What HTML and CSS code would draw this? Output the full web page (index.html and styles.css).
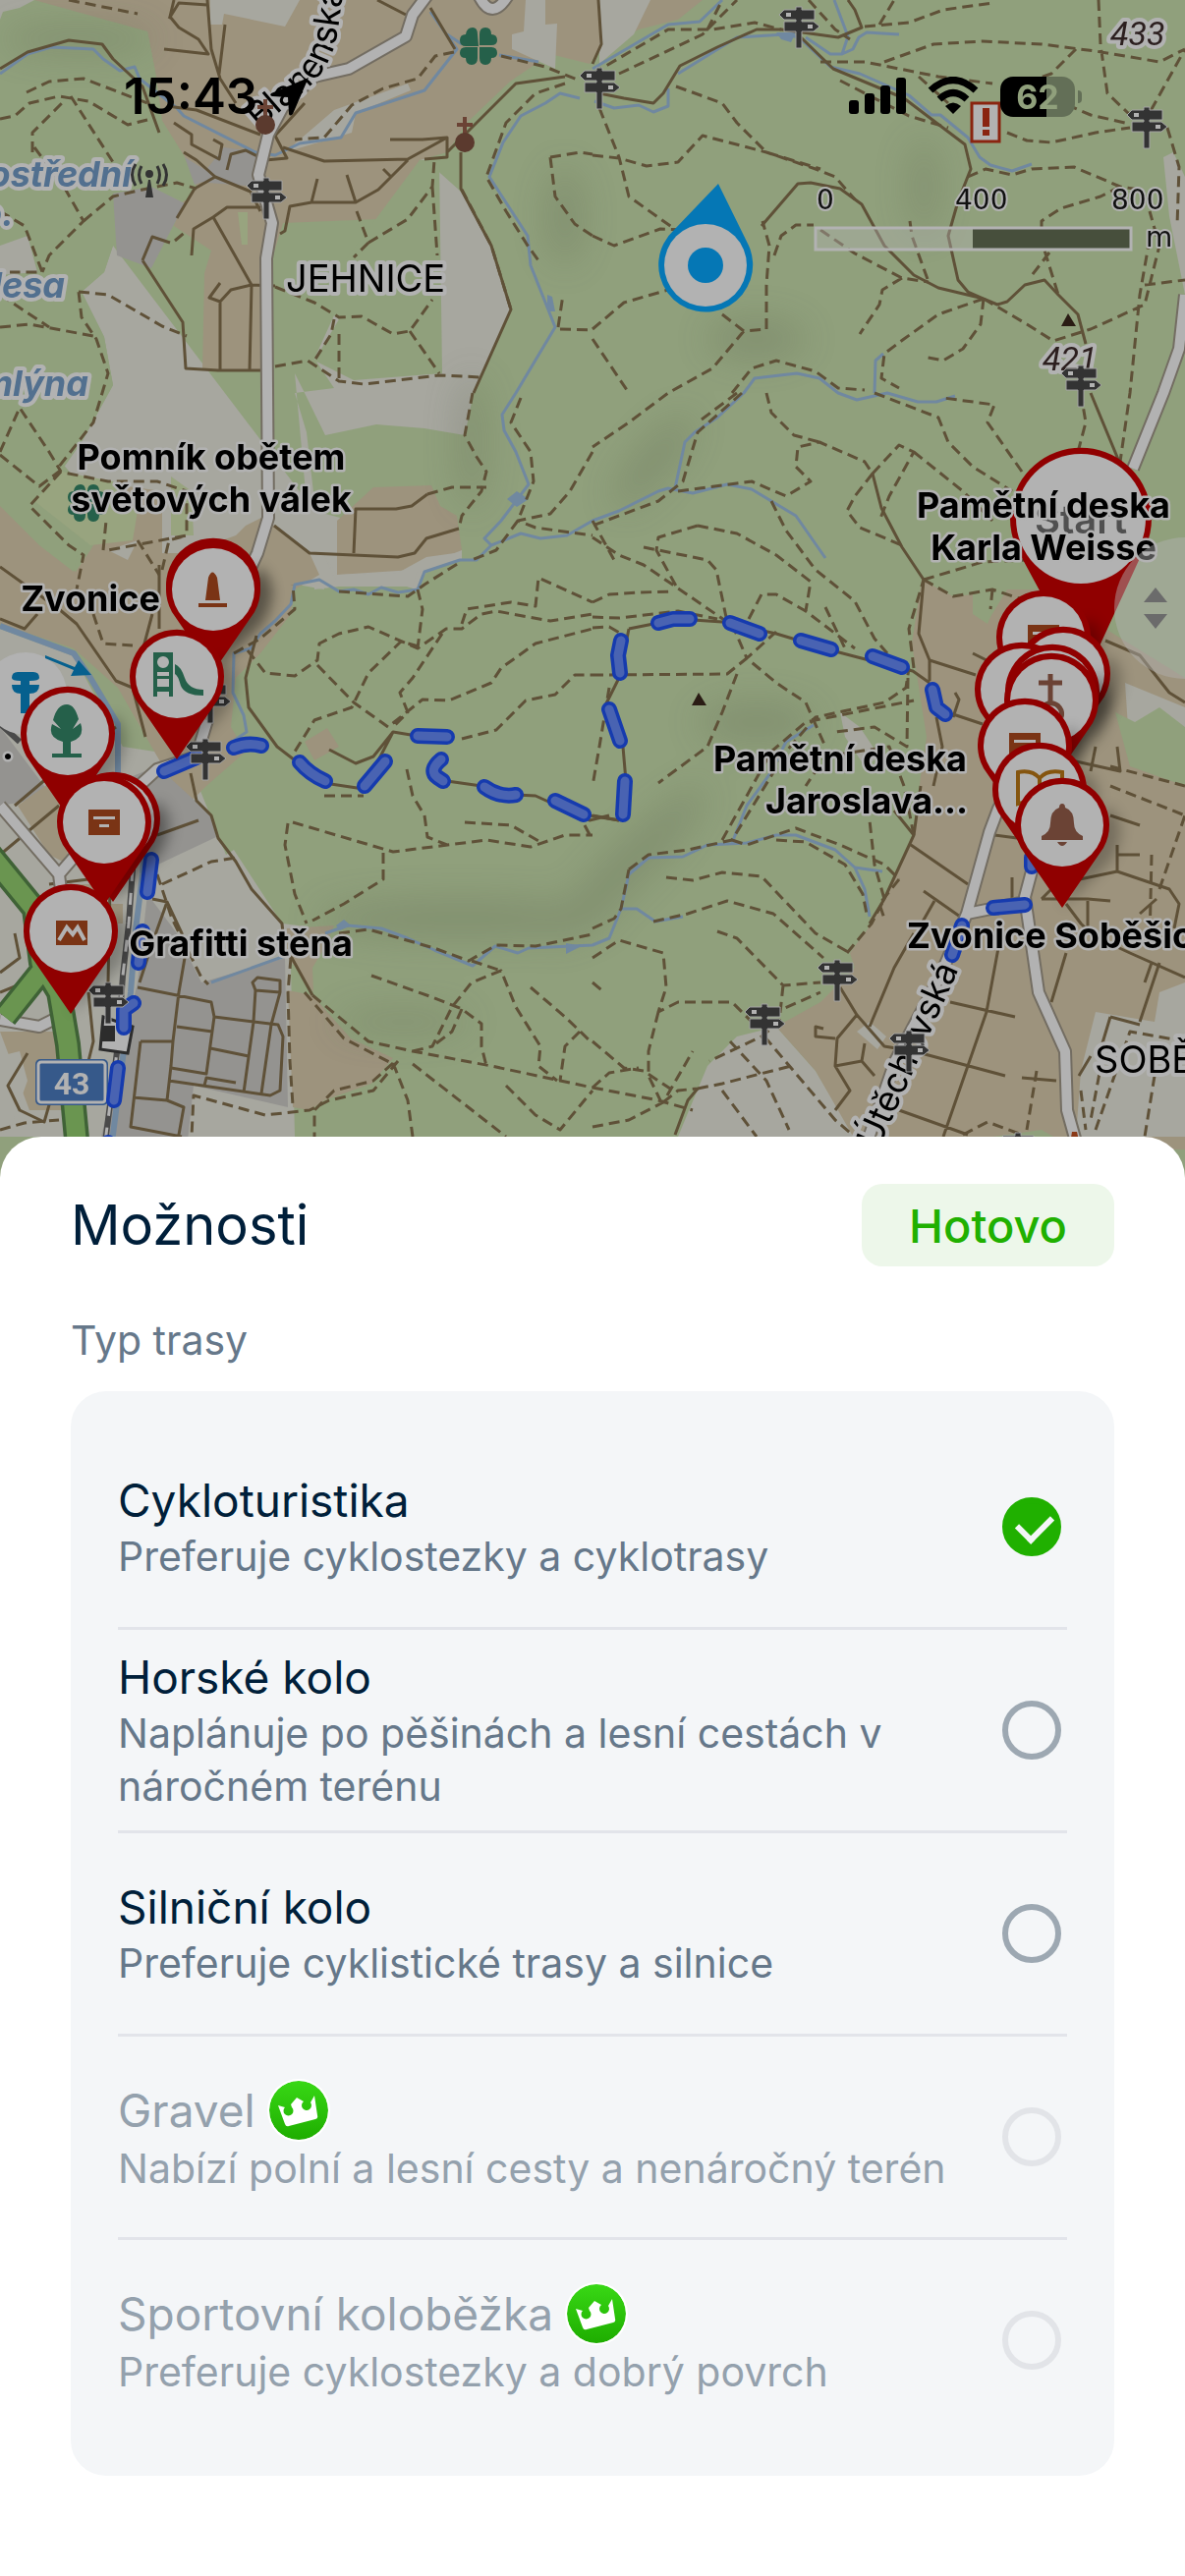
FILE: index.html
```
<!DOCTYPE html>
<html lang="cs">
<head>
    <meta charset="UTF-8">
    <meta name="viewport" content="width=device-width, initial-scale=1.0">
    <title>Možnosti trasy</title>
    <link rel="stylesheet" href="styles.css">
</head>
<body>
    <header class="status">
        <div class="status-group">
            <span class="time">15:43</span>
            <svg width="42" height="42" viewBox="0 0 42 42"><path d="M40 2 2 18Q0 20 3 21L19 22 20 39Q21 42 24 39Z"/></svg>
        </div>
        <div class="status-group status-right">
            <svg width="58" height="40" viewBox="0 0 58 40">
                <rect y="24" width="10" height="14" rx="3"/>
                <rect x="16" y="17" width="10" height="21" rx="3"/>
                <rect x="32" y="9" width="10" height="29" rx="3"/>
                <rect x="48" y="1" width="10" height="37" rx="3"/>
            </svg>
            <svg width="52" height="40" viewBox="0 0 52 40">
                <path class="wifi" d="M3 14Q26 -7 49 14M12 23Q26 10 40 23"/>
                <path d="M26 38 18 30Q26 23 34 30Z"/>
            </svg>
            <div class="battery"><span>62</span></div>
        </div>
    </header>

    <svg class="map" viewBox="0 0 1206 1200">
        <defs>
            <filter id="soft"><feGaussianBlur stdDeviation="18"/></filter>
            <filter id="soft2" x="-50%" y="-50%" width="200%" height="200%"><feGaussianBlur stdDeviation="7"/></filter>
            <linearGradient id="crownBg" x2="0" y2="1">
                <stop offset="0" stop-color="#38d815"/>
                <stop offset="1" stop-color="#1ead00"/>
            </linearGradient>
            <g id="post">
                <path class="post" d="M-3 0H3V3H16V13H3V15H15L21 20 15 25H3V42H-3V25H-15V15H-3V13H-15L-20 8-15 3H-3Z"/>
                <path fill="#b2b2b2" d="M-13 6h5v4h-5zM9 18h5v4h-5z"/>
            </g>
            <g id="pin">
                <path class="shade" filter="url(#soft2)" d="M0 84 20 20 46 -20Q72 0 48 38Z"/>
                <path fill="#900000" d="M0 84-42 23A48 48 0 1 1 42 23Z"/>
                <circle r="42" fill="#b2b2b2"/>
            </g>
            <g id="sign">
                <path fill="#7a3415" d="M-16-13H16V13H-16Z"/>
                <path fill="#b2b2b2" d="M-11-6H11V-3H-11ZM-5 2H5V5H-5Z"/>
            </g>
            <g id="clover">
                <path fill="#25604a" d="M0 0H-13Q-19 0-19-6 -19-12-13-12 -12-19-6-19 -1-19-1-12ZM1-1V-12Q1-19 7-19 13-19 13-12 19-12 19-6 19-1 13-1ZM1 1H13Q19 1 19 7 19 12 13 12 13 19 7 19 1 19 1 12ZM-1 1V12Q-1 19-7 19 -13 19-13 12 -19 12-19 7 -19 1-13 1Z"/>
            </g>
            <g id="chapel">
                <path fill="#6b4335" d="M-2-18H2V-12H8V-8H2V0H-2V-8H-8V-12H-2Z"/>
                <circle cy="8" r="10" fill="#5b3a2e"/>
            </g>
            <path id="roads" d="M273 137 263 178 277 227 271 263 273 527 262 563 240 610M273 137 290 105 320 78 355 70 413 37 420 15 435 -5M125 815 160 783 200 770 211 733M0 820 60 890 65 930M60 890 125 815M0 1038 40 1045 60 1035M1206 300 1200 355 1184 400 1153 477M1050 760 1016 823 1007 847 984 930 957 993 911 1080 880 1170M984 930 1043 918M1060 820 1051 883 1043 913 1057 1010 1084 1070 1086 1130 1100 1180M485 -10Q500 28 520 -10"/>
            <path id="highway" d="M-10 870 35 925 42 980 60 1010 69 1063 79 1170M5 1035 45 985"/>
            <path id="route" d="M167 785 200 771M238 761Q252 755 266 759M305 776Q315 788 331 795M392 775 371 800M425 749 455 750M449 773Q436 784 445 791L451 795M493 801Q508 812 525 809M565 815 594 829M636 795 634 829M620 722 631 754M632 652 629 667 631 685M670 634 685 630 702 630M743 634 773 645M815 652 846 661M888 668 918 679M949 702 953 720 962 727M1050 873V882M1011 924 1043 921M979 942 969 972M154 875 150 908M145 948 141 980M136 1021 126 1028V1046M120 1087 116 1120M110 1163 108 1180"/>
        </defs>

        <!-- forests, fields, towns -->
        <rect width="1206" height="1200" fill="#90a07c"/>
        <g class="field">
            <path d="M0 0H35L20 8 3 12 0 20ZM115 250 106 277 83 297 106 343 115 392 83 450 62 470 92 505 110 560 330 600 322 565 320 510 312 440 300 400 340 395 320 365 345 310 375 247 430 160 469 195 500 250 520 315 482 400 473 443 432 436 383 432 331 443 310 400 300 380 320 600 345 597 407 595 424 600 434 582 470 570 470 560 320 520Z"/>
            <path d="M330 565 343 597 407 595 424 580 470 566 470 560 420 566Z"/>
            <path d="M0 640 75 668 125 760 190 770 230 870 238 865 287 940 312 943 296 985 300 1157H0Z"/>
            <path d="M750 1055 790 1045 830 1090 870 1157H690L720 1085Z"/>
            <path d="M1184 160 1194 155 1206 180V300L1190 220Z"/>
        </g>
        <path class="town" d="M35 0 150 32 158 73 165 123 188 160 200 190 185 207 177 230 200 245 215 255 208 278 206 377 265 377 277 263 288 227 385 223 408 207 427 163 455 155 475 125 519 83 560 55 600 65 610 50 650 30 690 20 715 0Z"/>
        <path class="town" d="M0 513 77 582 92 560 130 495 165 500 165 563 190 563 240 545 250 535 270 525 279 535 315 563 325 585 300 600 296 625 265 665 240 690 235 740 250 765 210 800 190 820 160 770 120 700 75 660 0 635Z"/>
        <path class="town" d="M938 590 970 607 990 605 1005 633 1025 600 1060 600 1206 690V1170H1095L1060 1150 990 1160H870L830 1090 790 1045 835 1020 870 985 865 970 887 940 900 915 930 850 937 790 943 750 928 655Z"/>
        <path class="town" d="M293 1008 318 1013 357 1057 400 1077 378 1103 330 1120 315 1130 298 1127ZM292 945 340 942 330 965 318 985 319 1010 290 970ZM310 755 333 741 345 760 320 774ZM343 530 380 496 439 494 448 515 465 525 470 560 420 580 343 585Z"/>
        <path class="field" d="M214 0H305L290 27 228 14 226 25H214ZM535 0H555V25L567 24 565 70 521 50V35L533 32ZM600 0H610V65L645 35 662 0ZM290 155 340 112 415 85 418 92 362 115 358 135ZM330 565 343 585 405 583 434 567 470 562 468 570 424 583 420 597 345 597Z"/>
        <path class="field" d="M1145 695 1206 720V800L1150 770ZM1206 1000 1180 1010 1175 1040 1115 1030 1100 1090 1095 1157H1206ZM872 1050 885 1040 902 1055 893 1068Z"/>
        <path fill="#90a07c" d="M0 20 35 8 150 32 158 73 165 123 188 160 200 190 190 205 154 190 115 197V250L106 277 83 297 106 343 115 392 83 450 62 480 90 505 75 582 40 555 0 515ZM427 163 447 162 450 380 360 387 320 367 345 325 320 305 355 260ZM1135 725 1155 735 1180 720 1206 740V800L1150 780ZM990 605 1015 610 1005 635 990 625Z"/>
        <path fill="#98a47f" d="M35 510 62 480 115 490 140 520 135 550 92 555ZM174 485 195 500 197 545 174 545ZM242 216H252V249H246Z"/>
        <path fill="#a7a79f" d="M0 250 28 240 38 277 0 280ZM110 560 140 550 130 570Z"/>
        <path class="urban" d="M115 197 154 190 188 207 154 273 119 260ZM188 160 220 180 198 188ZM228 150 262 155 262 190 200 185ZM0 740 60 820 160 780 215 830 220 852 150 885 120 800 0 820ZM150 910 180 950 205 1000 290 975 293 1127 197 1105 190 1170H100L140 1000Z"/>
        <path class="town" d="M18 820 60 790 70 880 50 870ZM0 1050 60 1050 70 1130 30 1130ZM110 920H125V940H110ZM40 930 60 900 100 900 90 1000Z"/>
        <path fill="#a7a79f" d="M0 1075 20 1070 28 1100 10 1150 0 1157ZM855 725 875 740 895 770 880 780 860 750Z"/>

        <!-- hill shading -->
        <g class="hill" filter="url(#soft)">
            <ellipse cx="80" cy="40" rx="80" ry="14"/>
            <ellipse cx="480" cy="450" rx="14" ry="70"/>
            <ellipse cx="575" cy="220" rx="18" ry="50"/>
            <ellipse cx="940" cy="190" rx="14" ry="50"/>
            <ellipse cx="770" cy="345" rx="50" ry="20"/>
            <ellipse cx="665" cy="470" rx="60" ry="18" transform="rotate(-50 665 470)"/>
            <ellipse cx="470" cy="935" rx="150" ry="20"/>
            <ellipse cx="640" cy="880" rx="110" ry="20" transform="rotate(-45 640 880)"/>
            <ellipse cx="770" cy="735" rx="60" ry="20"/>
            <ellipse cx="410" cy="1040" rx="70" ry="12"/>
        </g>

        <!-- streams -->
        <path class="stream" d="M0 75 28 55 52 48 95 50 105 60 122 72 137 68 142 80 180 110 187 118 260 155 280 158 305 146 347 140 362 115 432 92 465 50 438 12M455 35 470 45M508 56 548 63M590 100 570 95 555 105 530 118 512 145 498 180 537 240 540 270 565 333 525 400 511 422 513 438 525 460 538 493 510 530 493 548 500 555 485 570 468 570 432 582 425 600 405 603 388 598 375 605 360 600 345 602 325 590 300 595 296 615 280 632 265 645 255 660 238 665 237 705 248 728 251 745 232 758M500 555 530 543 550 548 577 545 603 530 630 520 670 500 680 497 705 502 740 493 765 498 785 510 810 525 840 568M687 497 697 450 707 440 730 425 757 400 768 385 811 380 834 385 853 400 872 407 903 400 934 409 953 409 972 403M890 400 891 367 899 360M603 70 680 25 712 22 735 0M690 75 750 38 800 35 813 38 845 68 875 75 925 97 948 117 957 117 985 140 997 160 1008 168 1030 174 1050 167M849 0 863 37 857 55 845 55 820 38M857 55 868 50 874 38 882 33 915 35M605 103 625 110 650 107 665 114 680 108 680 90"/>
        <path class="stream" d="M331 950 354 942 388 945 415 955 442 967 481 983 504 963 527 970 538 965 603 962 620 955 632 925 640 890 660 873 695 872 720 860 760 858 790 850 810 850 850 865 870 883 880 905 885 933M870 883 898 887M632 925 648 925 667 938 695 933M828 738 800 755 784 787 760 820 745 858M215 1000 290 973"/>
        <path class="river" d="M0 637 75 665 92 690 120 737 120 800 148 850 145 890 138 947 133 1010 125 1077 113 1170"/>
        <path fill="#7088a0" d="M516 508 526 500 538 508 526 516ZM342 942 350 936 357 942 346 947ZM576 960 592 963 576 971ZM790 33 810 33 805 43 795 40ZM557 300 562 302 565 317H557Z"/>

        <!-- small roads and footpaths -->
        <path class="lane" d="M0 70 28 53 70 41 104 45 115 60 145 88 162 135M177 0 173 17 182 28 202 40 212 55 167 50M172 19 182 3 211 5M211 0 215 50 224 80 240 105M229 25 223 75M170 108 200 112 265 137M187 155 200 163 219 180 255 195 265 215M219 180 198 192 180 222M177 125 195 137 195 147 223 162 226 147 217 142M231 173 235 157 250 153 270 163 292 161 280 138 310 105M288 150 330 164 415 162 455 140 430 142 397 142M455 140 455 160 432 162M469 155 469 192 500 250 520 315 482 400M415 163 385 193 362 206 317 206 295 210 290 235 285 238M362 206 353 178M317 206 323 182M398 180 390 172M265 211 231 211 217 221 197 233 195 260M217 221 256 290 254 377M280 291 256 290 235 295 224 307 213 303 224 288M224 307V377M145 265 155 241 173 247M145 265 186 328 189 375 222 377 265 377M455 155 525 85 575 78M438 8 463 50M384 0 413 15"/>
        <path class="lane" d="M610 95 635 100 665 105 675 95 692 67 730 48 770 30 795 30 853 38 877 28 870 10 863 0M815 38 848 70 920 100 982 147 988 172 975 205 965 240 975 285 985 297 1001 304 1015 310 1025 307 1043 290 1063 285 1077 300 1097 320 1105 350M775 230 812 187 825 186 855 192 877 208 900 250 930 280 955 293 1001 304M279 535 315 563 405 567 422 563 434 548 467 538M360 563 362 518 403 518 419 515 435 503M609 0 612 45 603 65M1110 400 1139 470M888 482 897 517 918 557 940 590 935 645 946 672 946 693M946 672 993 687M640 640 665 635 705 631 735 633 790 645 850 663 915 680 929 683 946 695M640 640 630 690 615 720 634 760 637 795M953 730 959 760 950 800M970 727 1000 737M972 705 976 712 970 730M990 665 1010 675M1125 652 1160 667 1190 705 1206 715"/>
        <path class="lane" d="M0 577 60 620 78 635 118 693 135 700 155 625M0 630 25 640 38 625M162 640V575M261 647 250 690 253 720 282 760 295 770 330 797 370 803 400 745 430 750M335 763 362 777 380 770 400 745M455 795 490 800 525 809 545 810 600 835 620 830M600 830 630 835M194 787 200 815 215 830 222 853 240 877 256 905 287 940 290 970 297 975 318 1013M160 850 202 835M135 700 148 750M15 820 62 780 118 740M0 870 60 820M50 900 90 895 108 885"/>
        <path class="lane" d="M143 1060H176L174 1085 170 1120 135 1117M143 1060 133 1147 185 1157M182 1010 176 1060M140 1005 190 1015 215 1020 218 1035 210 1093 174 1087M180 1045 216 1050M218 1035 283 1043 288 1055 285 1110 275 1115 172 1100M258 1040 248 1112M276 1043 266 1113M214 1067 253 1075M257 1000 262 995 285 998V1010L260 1008ZM285 1010 276 1043M260 1008 258 1040M188 975 182 1010M170 1120 187 1127 182 1155M155 915 170 918 185 950 188 975M170 918 155 960 142 1000M208 1105 210 1097 240 1102M28 1072 8 1105 20 1130 45 1142 60 1090M112 900 110 1000M15 950 20 975 0 990M0 1010 25 1000 40 980M90 1010 95 1060 85 1100"/>
        <path class="lane" d="M855 1005 872 1033 900 1065 930 1070 1023 1095M872 1033 852 1057 850 1085 865 1110 850 1130M850 1085 877 1080 890 1095M877 1080 880 1062M850 1057 830 1055 830 1045 838 1047M885 1045 910 985 930 950M927 860 985 900M940 907 980 935M951 917 935 945M967 1020 1033 1035M1016 965 1004 1030 960 1157M1085 970 1070 1020M915 1130 985 1155M1040 1097 1075 1100M1012 850 1035 853M1030 893V920M1060 915 1075 900 1137 887 1190 905 1200 920 1195 945M1060 915H1107L1130 917M1107 917V950L1150 970 1206 995M1137 887V860M1137 870H1160M1085 920 1100 940 1110 950M1180 980 1160 1040M1172 980 1165 1000M1130 1035 1160 1043M1130 1035 1118 1075M1110 1075 1098 1095M687 1155 700 1120 710 1108M1095 775 1140 785 1137 760M1115 760 1110 785M1130 830 1160 840M1177 915 1160 930M930 850 900 915 885 940M910 825 930 850 937 800M603 830 630 835"/>
        <path class="foot" d="M27 94 50 83 85 80 150 105M0 121 15 118 30 105 60 98 90 103 130 127 150 122M72 98 115 165M33 155 33 135 65 103M35 150 65 190 85 225 50 260 43 277M85 225 115 200 145 193 180 186 200 192M0 215 25 230 43 277 10 277M80 297 110 300 165 332 190 342M80 297 83 323 98 345 110 380 95 430 60 475M0 333 30 330 95 342M0 300 50 333M462 53 443 57 425 80 390 90 358 107 330 140 300 142M375 247 415 223 440 190 442 163M440 190 445 260M363 215 375 247 360 262M280 292 320 308 345 323 368 322 400 340 417 337 440 305M417 337 447 380M340 325 337 340 320 367M280 373 313 367 345 388 370 391 447 382 490 384M345 340 345 390M470 193 500 250 520 315M575 85 545 95 515 125 495 180 515 215 537 250 550 268M560 160 590 155 603 157M560 160 565 200 585 228 603 240M570 335 603 336M70 0 140 14M510 57 555 68 590 82M568 333 573 300M178 245 190 235"/>
        <path class="foot" d="M603 75 680 30 725 30 768 23 795 30M630 75 715 35 750 0M720 30 735 0M603 158 630 161 658 169 690 165 715 138 780 155 830 172 850 180 870 203M610 110 630 160 640 200 685 232M688 88 735 105 750 125 780 155 835 172M603 240 625 250 672 233 700 234M603 335 635 308 680 295M735 320 757 337 780 335 780 290 783 250 776 225M757 337 725 375 680 400 640 430 603 455M788 260 795 240 810 229H828M835 234 870 258 918 283 945 287M926 225 928 240 945 287M918 283 898 295 895 310 875 340M1001 304 955 320 920 345 900 360 897 385 915 395M1001 304 998 330 980 355 960 367 940 363M1001 304 1045 330 1072 347 1110 335 1165 310 1180 250 1170 215M1170 243 1160 300 1150 400 1140 470M1118 0 1120 45 1127 95 1148 115 1167 120 1206 50M880 27 925 23 960 10 1010 3M895 25 910 0M823 0 850 30 865 40M900 63 950 45 1000 42 1060 45 1115 52 1180 63 1206 50M835 63 880 63 955 78 1010 85M1095 50 1070 75 1050 82M935 78 965 105M1025 135 1045 143 1070 145 1115 135 1150 130M1070 100 1110 117 1145 125M985 180 1003 172 1030 178 1050 172 1093 170 1140 190 1160 193M1140 190 1120 200 1080 212 1060 225V245L1077 300M1068 257 1048 283M1188 130 1200 170 1198 230M1165 290 1206 285M855 82 925 118 965 130M603 345 640 400"/>
        <path class="foot" d="M745 400 765 375 790 367 830 378 853 395 880 397M481 400 473 443 485 465 495 480 490 500 470 525 467 538M435 503 460 496H495M530 405 520 430 540 460 543 490 527 530 505 560 480 570M603 460 580 500 560 523 527 530 545 537 603 545M603 530 625 570M755 400 710 440 695 490 670 510 603 535M750 400 710 430M690 500 765 490 800 505 825 490 810 475 812 455 834 450 880 470 888 482M780 400 785 420 808 443 834 450M888 482 870 505 862 520 875 537 918 555M888 482 915 453 930 460 905 505 895 530M930 460 980 500 1010 530M890 400 955 425 965 450 990 475 1030 500M1040 480 1005 430 1012 412 960 405M1097 460 1105 430 1100 400M785 510 800 540 830 580 870 612 890 650 903 665M603 547 630 565 655 575 680 592 740 633M710 535 670 547 668 560 690 600M655 557 720 570 729 580 740 633M710 535 750 543 790 565 825 592 820 622M762 630 775 605 790 605 820 622 870 660M840 618 860 660M603 613 620 605 650 603 685 602M603 628 630 629 690 622 730 630M745 635 760 670 790 643M603 687 740 686 760 670 790 695 820 715 840 760M750 686 735 725 720 760 670 797M603 639 620 638 632 645M940 590 970 607 1010 600 1040 610M940 590 1000 572 1045 570M930 680 925 640 940 590M1010 600 1008 620"/>
        <path class="foot" d="M0 460 20 415 50 460 62 480M0 463 40 495 60 480 110 490 160 490 190 500 190 545 110 560M62 480 30 515 70 555 85 565 78 600M105 560 108 530M140 550 162 585M165 580 172 550 190 545M95 625 105 655 135 657M252 662 270 685 300 688 323 672 325 655 345 645 375 638 425 660 454 640 470 640 490 625 505 622 560 632 603 625M426 658 408 653 375 685 358 720 320 733 300 765M470 635 475 620 520 613 545 617 548 588 603 613M323 677 360 715 395 740 430 712 457 713 500 695 510 680 545 655 603 640M450 645 420 690 407 705 415 725 400 740M470 752 505 743 535 713 565 707 585 687 603 687M425 600 430 620 425 660M345 602 415 607 432 595 467 573M238 665 265 650 300 620 298 595M293 838 290 860 300 910 312 940M298 837 400 867 495 855 540 862 575 850 603 850M390 868V895L350 920 318 937M473 837 520 840 550 857M414 783 420 810 432 830 435 852 455 860M620 700 610 760 603 800M345 950 375 946 442 965 477 978 505 962 545 963 603 951M165 900 215 877 240 873M160 890 175 935 205 995 212 1002M330 810H370M595 840 603 855"/>
        <path class="foot" d="M293 1010 295 1080 298 1125M296 975 293 1010M318 1013 375 1060 420 1070 500 1085 603 1107M310 1010 350 1057 400 1083M420 1070 440 1065 460 1025 480 1000 510 988 525 1025 550 1065 548 1085 567 1100M378 993 440 1015 470 1027 490 1042V1065L495 1085M470 1027 460 1050 440 1065M480 978 510 988M540 1005 575 1035 603 1062M400 1082 415 1120 420 1157M420 1083 515 1157M400 1082 380 1100 340 1110 320 1130 320 1157M405 1080 380 1110 335 1120 315 1130 270 1135 197 1115 195 1157M515 1105 545 1135 570 1150 603 1110M590 1050 575 1065 570 1100"/>
        <path class="foot" d="M640 885 660 870 700 865 745 855 800 765 830 730 900 715 922 700 925 680M735 855 785 765 820 735 930 713M745 855 760 860 810 843 855 860 900 880 915 895M790 855 820 857 860 880 878 910 882 930M678 893 705 896 735 888 775 892 830 950 865 970M665 938 700 930 740 917 787 930 838 975M730 948 750 955 797 1003 835 1000M603 945 625 935 632 925 640 885M603 975 630 957 675 970 678 1005 670 1030 690 1020 745 1020 770 1045 790 1030 835 1010M603 1000 615 1010M603 1060 635 1087 655 1090 685 1110M670 1030 660 1070 660 1095 673 1122M603 1107 670 1120 705 1130M603 1147 640 1140 675 1122 705 1070M603 1107 620 1092 650 1087M797 1003 793 1040 775 1055 722 1080M710 1108 735 1103 805 1085M675 1122 690 1110 710 1108M743 1060 780 1100 803 1150M778 1055 850 1140 870 1157M735 1110 770 1157M862 970 887 940 900 915 890 880 885 835M915 895 895 920 900 935M930 850 920 800 905 760 840 770 820 800M924 690 923 760 890 740 850 745M1055 1090 1045 1150M1125 1060 1110 1140M1175 1095 1165 1157M1115 1150 1150 1050 1206 1060M1130 780 1206 800M1130 800 1206 830M1172 870 1170 960M1180 905 1206 830M980 1155 1005 1142 1040 1155M1100 1110 1105 1150M0 1150 25 1143 60 1140"/>
        <path class="works" d="M0 720 115 810M-2 735 20 755M128 800 135 885 131 940 125 993 120 1063 106 1170"/>
        <path class="rail" d="M135 885 131 940 125 993 120 1063 106 1170"/>

        <!-- main roads -->
        <use href="#roads" class="road-edge"/>
        <use href="#roads" class="road"/>
        <use href="#highway" class="highway-edge"/>
        <use href="#highway" class="highway"/>
        <path fill="#b2b2b2" stroke="#2c2c2c" stroke-width="3" d="M105 1035 135 1045 130 1072 102 1068Z"/>
        <path fill="#2c2c2c" d="M103 1044H117V1060H103Z"/>
        <rect fill="#36598a" x="36" y="1078" width="74" height="47" rx="5"/>
        <rect class="shield" x="39" y="1081" width="68" height="41" rx="3"/>
        <text class="shield-text" x="73" y="1114">43</text>

        <!-- planned route -->
        <use href="#route" class="route-edge"/>
        <use href="#route" class="route"/>

        <!-- names -->
        <path id="street1" fill="none" d="M264 132 308 94Q338 70 344 30L356 -60"/>
        <text class="street"><textPath href="#street1">Blanenská</textPath></text>
        <text class="street" transform="translate(894 1170) rotate(-66)">Útěchovská</text>
        <text class="place" x="291" y="297">JEHNICE</text>
        <text class="place" x="1114" y="1092">SOBĚŠICE</text>
        <g class="water">
            <text x="134" y="190">prostřední</text>
            <text x="14" y="230">o.</text>
            <text x="66" y="303">lesa</text>
            <text x="90" y="403">mlýna</text>
        </g>
        <g class="height">
            <text x="1130" y="46">433</text>
            <text x="1061" y="377">421</text>
        </g>
        <path fill="#2a1c14" d="M1087 319 1095 332H1080ZM711 705 719 718H704Z"/>

        <!-- points of interest -->
        <use href="#clover" x="487" y="47"/>
        <use href="#clover" x="88" y="512"/>
        <use href="#chapel" x="270" y="119"/>
        <use href="#chapel" x="473" y="137"/>
        <g fill="none" stroke="#333" stroke-width="3">
            <path d="M144 169Q139 178 144 187M138 167Q131 178 138 189M160 169Q165 178 160 187M166 167Q173 178 166 189"/>
            <path fill="#333" stroke="none" d="M148 201 151 183H153L156 201ZM148 177a4 4 0 0 1 8 0a4 4 0 0 1-8 0Z"/>
        </g>
        <use href="#post" x="271" y="181"/>
        <use href="#post" x="610" y="69"/>
        <use href="#post" x="813" y="7"/>
        <use href="#post" x="1167" y="109"/>
        <use href="#post" x="1100" y="372"/>
        <use href="#post" x="214" y="694"/>
        <use href="#post" x="209" y="752"/>
        <use href="#post" x="110" y="1000"/>
        <use href="#post" x="852" y="977"/>
        <use href="#post" x="778" y="1022"/>
        <use href="#post" x="925" y="1049"/>
        <use href="#post" x="1036" y="1153"/>
        <path fill="#8a3a18" d="M1088 1170 1091 1152H1096L1100 1170Z"/>
        <rect x="989" y="105" width="28" height="39" fill="#b2b2b2" stroke="#8a2410" stroke-width="3"/>
        <path fill="#8a2410" d="M1000 110H1007V129H1000ZM1000 132H1007V138H1000Z"/>

        <g class="scale">
            <text x="831" y="213">0</text>
            <text x="972" y="213">400</text>
            <text x="1131" y="213">800</text>
            <text x="1166" y="251">m</text>
            <rect x="830" y="232" width="160" height="22" fill="#b2b2b2" fill-opacity=".4"/>
            <rect x="990" y="232" width="161" height="22" fill="#474f3c"/>
            <rect x="830" y="232" width="321" height="22" fill="none" stroke="#b2b2b2" stroke-width="3"/>
        </g>

        <!-- current position -->
        <path fill="#0577b5" d="M731 187 762 250A48 48 0 1 1 686 234Z"/>
        <circle cx="718" cy="270" r="42" fill="#b2b2b2"/>
        <circle cx="718" cy="270" r="18" fill="#0577b5"/>

        <!-- pins -->
        <circle cx="26" cy="706" r="42" fill="#b2b2b2"/>
        <path fill="#06608e" d="M12 690Q12 684 18 684H34Q40 684 40 690 40 693 30 693V697H40Q40 706 30 706V726H21V706Q12 706 12 697H21V693Q12 693 12 690ZM46 667 76 679 80 672 93 687 72 688 75 682 46 670Z"/>
        <use href="#pin" x="217" y="596"/>
        <use href="#pin" x="217" y="600"/>
        <path fill="#7a3415" d="M209 611 212 588Q216 577 221 588L224 611ZM202 614H231V618H202Z"/>
        <use href="#pin" x="180" y="689"/>
        <path fill="#25604a" fill-rule="evenodd" d="M156 664H176V709H172V704H160V709H156ZM160 674A6 6 0 0 0 172 674A6 6 0 0 0 160 674ZM160 684V688H172V684ZM160 691V699H172V691ZM178 676Q184 678 188 690T207 702V708Q188 708 184 698 181 687 178 686Z"/>
        <use href="#pin" x="69" y="747"/>
        <path fill="#25604a" d="M68 717Q76 717 80 732L74 742 82 736Q87 751 72 755V767H83V771H53V767H64V755Q48 751 53 737L62 742 54 733Q58 717 68 717Z"/>
        <use href="#pin" x="115" y="834"/>
        <use href="#pin" x="106" y="837"/>
        <use href="#sign" x="106" y="837"/>
        <use href="#pin" x="72" y="948"/>
        <path fill="#7a3415" d="M57 937H89V962H57Z"/>
        <path fill="none" stroke="#b2b2b2" stroke-width="4" d="M60 957 68 944 74 951 79 944 86 957"/>

        <path fill="#900000" d="M1105 688 1039 566A72 72 0 1 1 1161 566Z"/>
        <circle cx="1100" cy="528" r="66" fill="#b2b2b2"/>
        <text class="start" x="1100" y="543">Start</text>
        <use href="#pin" x="1062" y="649"/>
        <use href="#sign" x="1062" y="649"/>
        <use href="#pin" x="1082" y="686"/>
        <use href="#pin" x="1040" y="702"/>
        <use href="#pin" x="1071" y="704"/>
        <use href="#pin" x="1070" y="713"/>
        <path fill="none" stroke="#6b4335" stroke-width="5" d="M1069 686V714M1057 695H1081M1059 730A11 11 0 1 1 1080 730"/>
        <use href="#pin" x="1043" y="759"/>
        <use href="#sign" x="1043" y="759"/>
        <use href="#pin" x="1058" y="804"/>
        <path fill="none" stroke="#85550f" stroke-width="4" d="M1058 820V792Q1050 783 1036 786V818Q1050 814 1058 820 1066 814 1081 818V786Q1066 783 1058 792"/>
        <use href="#pin" x="1081" y="840"/>
        <path fill="#6b4335" d="M1081 818Q1084 818 1084 822 1093 825 1093 838 1093 847 1102 851V855H1060V851Q1069 847 1069 838 1069 825 1078 822 1078 818 1081 818ZM1076 857H1086Q1081 865 1076 857Z"/>

        <g class="name">
            <text x="215" y="478">Pomník obětem</text>
            <text x="215" y="521">světových válek</text>
            <text x="92" y="622">Zvonice</text>
            <text x="245" y="973">Grafitti stěna</text>
            <text x="1062" y="527">Pamětní deska</text>
            <text x="1062" y="570">Karla Weisse</text>
            <text x="855" y="785">Pamětní deska</text>
            <text x="882" y="828">Jaroslava…</text>
            <text class="from-left" x="923" y="965">Zvonice Soběšice</text>
            <text x="8" y="773">.</text>
        </g>

        <circle cx="1206" cy="619" r="72" fill="#b2b2b2" fill-opacity=".45"/>
        <path fill="#6b6b6b" d="M1176 598 1188 613H1164ZM1176 640 1188 625H1164Z"/>
    </svg>

    <main class="sheet">
        <div class="sheet-head">
            <h1>Možnosti</h1>
            <button type="button" class="done">Hotovo</button>
        </div>
        <h2 id="typ">Typ trasy</h2>
        <div class="options" role="radiogroup" aria-labelledby="typ">
            <label class="option">
                <span class="option-text">
                    <span class="option-title">Cykloturistika</span>
                    <span class="option-info">Preferuje cyklostezky a cyklotrasy</span>
                </span>
                <input type="radio" name="typ" value="cyklo" checked>
            </label>
            <label class="option">
                <span class="option-text">
                    <span class="option-title">Horské kolo</span>
                    <span class="option-info">Naplánuje po pěšinách a lesní cestách v náročném terénu</span>
                </span>
                <input type="radio" name="typ" value="horske">
            </label>
            <label class="option">
                <span class="option-text">
                    <span class="option-title">Silniční kolo</span>
                    <span class="option-info">Preferuje cyklistické trasy a silnice</span>
                </span>
                <input type="radio" name="typ" value="silnicni">
            </label>
            <label class="option locked">
                <span class="option-text">
                    <span class="option-title">Gravel
                        <svg class="crown" viewBox="0 0 60 60"><circle cx="30" cy="30" r="30" fill="url(#crownBg)"/><path fill="#fff" d="M9 25 16 27A5 5 0 1 0 23 27L22 24 28 17 35 21A5 5 0 1 0 42 22L46 15 49 35Q50 38 47 39L20 46Q17 47 16 44Z"/></svg>
                    </span>
                    <span class="option-info">Nabízí polní a lesní cesty a nenáročný terén</span>
                </span>
                <input type="radio" name="typ" value="gravel" disabled>
            </label>
            <label class="option locked">
                <span class="option-text">
                    <span class="option-title">Sportovní koloběžka
                        <svg class="crown" viewBox="0 0 60 60"><circle cx="30" cy="30" r="30" fill="url(#crownBg)"/><path fill="#fff" d="M9 25 16 27A5 5 0 1 0 23 27L22 24 28 17 35 21A5 5 0 1 0 42 22L46 15 49 35Q50 38 47 39L20 46Q17 47 16 44Z"/></svg>
                    </span>
                    <span class="option-info">Preferuje cyklostezky a dobrý povrch</span>
                </span>
                <input type="radio" name="typ" value="kolobezka" disabled>
            </label>
        </div>
    </main>
</body>
</html>
```
FILE: styles.css
```
* {
    box-sizing: border-box;
}

body {
    margin: 0;
    background-color: #fff;
    color: #001f3a;
    font-family: Inter, Roboto, "Liberation Sans", sans-serif;
    overflow-x: hidden;
}

/* status bar over the map */
.status {
    position: absolute;
    top: 0;
    left: 0;
    right: 0;
    display: flex;
    justify-content: space-between;
    padding: 76px 106px 0 126px;
}

.status-group {
    display: flex;
    align-items: center;
    gap: 12px;
    height: 44px;
}

.status-right {
    gap: 22px;
}

.time {
    color: #000;
    font-size: 51px;
    font-weight: 600;
    line-height: 44px;
}

.wifi {
    fill: none;
    stroke: #000;
    stroke-width: 7px;
}

.battery {
    position: relative;
    width: 76px;
    height: 41px;
    margin-right: 6px;
    border-radius: 13px;
    background: linear-gradient(90deg, #000 62%, #636f57 62%);
    color: #90a07c;
    font-size: 34px;
    font-weight: 700;
    line-height: 41px;
    text-align: center;
}

.battery::after {
    content: "";
    position: absolute;
    right: -7px;
    top: 14px;
    width: 4px;
    height: 13px;
    border-radius: 0 4px 4px 0;
    background-color: #636f57;
}

/* map */
.map {
    display: block;
    width: 100%;
    height: auto;
}

.field {
    fill: #a7a79f;
}

.town {
    fill: #9d937d;
}

.urban {
    fill: #949390;
}

.hill {
    fill: #5c6650;
    opacity: 0.28;
}

.stream, .river, .lane, .foot, .works, .rail, .road, .road-edge,
.highway, .highway-edge, .route, .route-edge {
    fill: none;
    stroke-linejoin: round;
}

.stream {
    stroke: #7088a0;
    stroke-width: 3px;
}

.river {
    stroke: #7088a0;
    stroke-width: 6px;
}

.lane {
    stroke: #5f5138;
    stroke-width: 3px;
}

.foot {
    stroke: #5f5138;
    stroke-width: 3px;
    stroke-dasharray: 11 6;
}

.works {
    stroke: #4a4a4a;
    stroke-width: 6px;
}

.rail {
    stroke: #b2b2b2;
    stroke-width: 3px;
    stroke-dasharray: 12 12;
}

.road-edge {
    stroke: #736d62;
    stroke-width: 14px;
}

.road {
    stroke: #b2b2b2;
    stroke-width: 10px;
}

.highway-edge {
    stroke: #3f6236;
    stroke-width: 26px;
}

.highway {
    stroke: #6a9550;
    stroke-width: 19px;
}

.route, .route-edge {
    stroke-linecap: round;
}

.route-edge {
    stroke: #163bae;
    stroke-width: 16px;
}

.route {
    stroke: #4963b2;
    stroke-width: 9px;
}

.shield {
    fill: #36598a;
    stroke: #b2b2b2;
    stroke-width: 3px;
}

.shield-text {
    fill: #b2b2b2;
    font-family: Roboto, sans-serif;
    font-size: 32px;
    font-weight: 700;
    text-anchor: middle;
}

.post {
    fill: #333;
    stroke: #a3a3a3;
    stroke-width: 1px;
}

.shade {
    opacity: 0.25;
}

.street, .place, .water, .height, .name, .scale text {
    stroke: #b2b2b2;
    stroke-width: 8px;
    stroke-linejoin: round;
    paint-order: stroke;
}

.street {
    font-size: 36px;
}

.place {
    font-size: 38px;
}

.water {
    fill: #52708f;
    font-size: 36px;
    font-style: italic;
    font-weight: 700;
    text-anchor: end;
}

.height {
    fill: #2c1f1f;
    font-family: Roboto, sans-serif;
    font-size: 34px;
    font-style: italic;
}

.scale text {
    fill: #111;
    font-family: "DejaVu Sans", sans-serif;
    font-size: 28px;
    stroke-width: 4px;
}

.name {
    font-size: 36px;
    font-weight: 700;
    text-anchor: middle;
    stroke-width: 5px;
}

.from-left {
    text-anchor: start;
}

.start {
    fill: #505050;
    font-size: 40px;
    font-weight: 600;
    text-anchor: middle;
}

/* bottom sheet */
.sheet {
    position: relative;
    margin-top: -43px;
    padding: 48px 72px 102px;
    border-radius: 42px 42px 0 0;
    background-color: #fff;
}

.sheet-head {
    display: flex;
    align-items: center;
    justify-content: space-between;
}

h1 {
    margin: 0;
    font-size: 56px;
    font-weight: 400;
    line-height: 84px;
}

.done {
    height: 84px;
    padding: 0 48px;
    border: 0;
    border-radius: 21px;
    background-color: #edf7ea;
    color: #20b000;
    font-family: inherit;
    font-size: 47px;
    font-weight: 500;
}

h2 {
    margin: 48px 0 24px;
    color: #66788a;
    font-size: 41px;
    font-weight: 400;
    line-height: 55px;
}

.options {
    padding: 36px 48px;
    border-radius: 36px;
    background-color: #f4f6f8;
}

.option {
    display: flex;
    align-items: center;
    justify-content: space-between;
    gap: 40px;
    min-height: 207px;
    padding-right: 6px;
    border-bottom: 3px solid #e2e4ea;
}

.option:last-child {
    min-height: 204px;
    border-bottom: 0;
}

.option-title {
    display: flex;
    align-items: center;
    gap: 14px;
    font-size: 46px;
    line-height: 60px;
}

.option-info {
    display: block;
    color: #66788a;
    font-size: 41px;
    line-height: 54px;
}

.locked .option-title,
.locked .option-info {
    color: #94a1ad;
}

.locked .option-title {
    line-height: 64px;
}

.crown {
    width: 60px;
    height: 60px;
    border-radius: 50%;
    box-shadow: 0 0 0 2px #fff;
}

.option input {
    appearance: none;
    flex: none;
    position: relative;
    width: 60px;
    height: 60px;
    margin: 0;
    border: 6px solid #9da8b2;
    border-radius: 50%;
}

.option input:disabled {
    border-color: #e2e4e8;
}

.option input:checked {
    border-color: #20b000;
    background-color: #20b000;
}

.option input:checked::after {
    content: "";
    position: absolute;
    left: 10px;
    top: 10px;
    width: 28px;
    height: 17px;
    border: solid #f4f6f8;
    border-width: 0 0 6px 6px;
    transform: rotate(-45deg);
}
```
